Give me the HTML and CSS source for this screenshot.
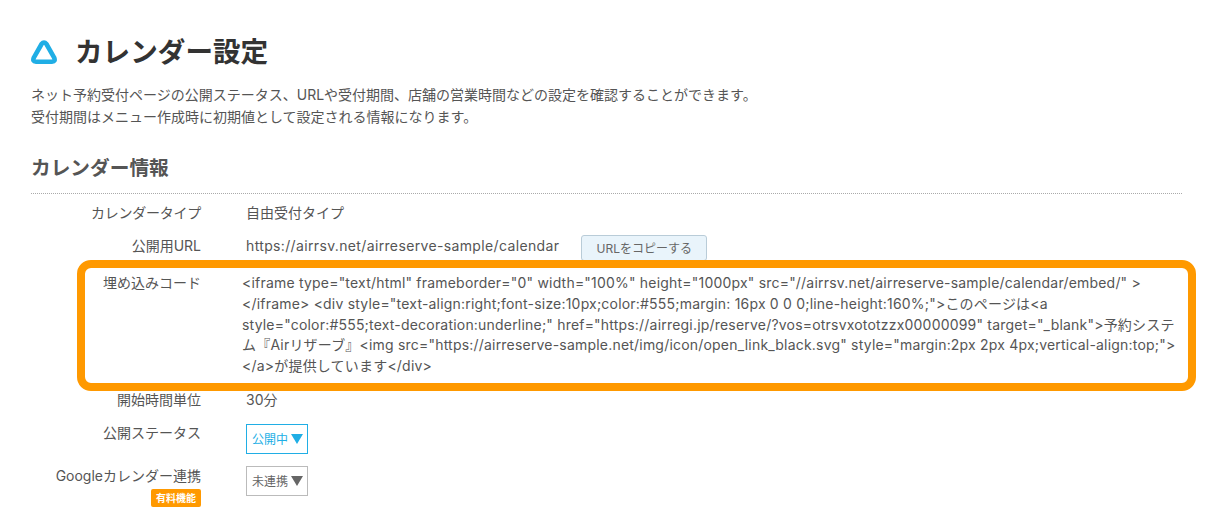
FILE: index.html
```html
<!DOCTYPE html>
<html lang="ja">
<head>
<meta charset="utf-8">
<title>カレンダー設定</title>
<link rel="stylesheet" href="styles.css">
</head>
<body>
<main class="page">
  <header class="title-row">
    <svg class="logo" width="26" height="24" viewBox="0 0 26 24" aria-hidden="true"><path d="M10.6 4 Q13 1 15.4 4 L23 17.3 Q25 21.7 21 21.7 L5 21.7 Q1 21.7 3 17.3 Z" fill="none" stroke="#20aee5" stroke-width="4.6" stroke-linejoin="round"/></svg>
    <h1 class="title">カレンダー設定</h1>
  </header>
  <p class="desc">ネット予約受付ページの公開ステータス、URLや受付期間、店舗の営業時間などの設定を確認することができます。<br>受付期間はメニュー作成時に初期値として設定される情報になります。</p>
  <h2 class="section">カレンダー情報</h2>
  <dl class="rows">
    <div class="row row-type">
      <dt class="label">カレンダータイプ</dt>
      <dd class="value">自由受付タイプ</dd>
    </div>
    <div class="row row-url">
      <dt class="label">公開用URL</dt>
      <dd class="value value-url"><span class="url">https://airrsv.net/airreserve-sample/calendar</span><button class="copy" type="button">URLをコピーする</button></dd>
    </div>
    <div class="row row-embed">
      <dt class="label">埋め込みコード</dt>
      <dd class="value code">&lt;iframe type="text/html" frameborder="0" width="100%" height="1000px" src="//airrsv.net/airreserve-sample/calendar/embed/" &gt;&lt;/iframe&gt; &lt;div style="text-align:right;font-size:10px;color:#555;margin: 16px 0 0 0;line-height:160%;"&gt;このページは&lt;a style="color:#555;text-decoration:underline;" href="https://airregi.jp/reserve/?vos=otrsvxototzzx00000099" target="_blank"&gt;予約システム『Airリザーブ』&lt;img src="https://airreserve-sample.net/img/icon/open_link_black.svg" style="margin:2px 2px 4px;vertical-align:top;"&gt;&lt;/a&gt;が提供しています&lt;/div&gt;</dd>
      <div class="highlight"></div>
    </div>
    <div class="row row-unit">
      <dt class="label">開始時間単位</dt>
      <dd class="value">30分</dd>
    </div>
    <div class="row row-status">
      <dt class="label">公開ステータス</dt>
      <dd class="value"><span class="select select-on">公開中<span class="arrow"></span></span></dd>
    </div>
    <div class="row row-google">
      <dt class="label">Googleカレンダー連携<br><span class="paid">有料機能</span></dt>
      <dd class="value"><span class="select select-off">未連携<span class="arrow"></span></span></dd>
    </div>
  </dl>
</main>
</body>
</html>
```
FILE: styles.css
```css
* { box-sizing: border-box; }
html, body { margin: 0; padding: 0; background: #fff; }
body {
  height: 520px;
  overflow: hidden;
  font-family: Inter, "Noto Sans CJK JP", sans-serif;
  font-size: 14px;
  color: #555;
}
.page { padding: 37px 26px 0 31px; }
.title-row { display: flex; align-items: center; height: 30px; gap: 18px; }
.logo { flex: none; }
.title { margin: 0; font-size: 27.6px; line-height: 30px; font-weight: 700; color: #333; }
.desc { margin: 17px 0 0; font-size: 14px; line-height: 22px; color: #555; }
.section {
  margin: 27px 0 0;
  padding-bottom: 12px;
  font-size: 19.7px;
  line-height: 26px;
  font-weight: 700;
  color: #555;
  border-bottom: 1px dotted #aaa;
}
.rows { margin: 0; }
.row { display: flex; position: relative; }
.label { flex: none; width: 170px; text-align: right; line-height: 21px; }
.value { margin: 0 0 0 45px; line-height: 21px; flex: 1; min-width: 0; }
.row-type { padding-top: 8px; height: 41px; }
.row-type .label { letter-spacing: -0.25px; }
.row-url { height: 29px; }
.value-url { display: flex; align-items: flex-start; gap: 22px; }
.url { letter-spacing: 0.355px; }
.copy {
  height: 26px;
  width: 126px;
  padding: 0;
  font: inherit;
  font-size: 12px;
  color: #666;
  background: #e9f4fb;
  border: 1px solid #b9ccd8;
  border-radius: 3px;
}
.row-embed { padding-top: 8px; height: 120px; }
.code { margin: 1px 0 0 41px; line-height: 20.8px; letter-spacing: 0.2px; }
.highlight {
  position: absolute;
  left: 46px;
  right: -14px;
  top: -4px;
  height: 131px;
  border: 8px solid #ff9900;
  border-radius: 14px;
  pointer-events: none;
}
.row-unit { padding-top: 5px; height: 38px; }
.row-status { height: 43px; }
.select {
  display: inline-flex;
  align-items: center;
  gap: 3px;
  width: 62px;
  height: 30px;
  padding-left: 5px;
  font-size: 12px;
  background: #fff;
  border: 1px solid;
}
.select-on { margin-top: 2px; color: #20aee5; border-color: #20aee5; }
.select-off { margin-top: 1px; color: #666; border-color: #bbb; }
.arrow {
  width: 0;
  height: 0;
  border-style: solid;
  border-width: 10px 6px 0;
  border-color: currentColor transparent transparent;
}
.paid {
  display: inline-block;
  height: 18px;
  margin-top: -1px;
  padding: 0 5px;
  font-size: 10px;
  line-height: 18px;
  font-weight: 700;
  color: #fff;
  background: #ff9900;
  border-radius: 2px;
}
```
